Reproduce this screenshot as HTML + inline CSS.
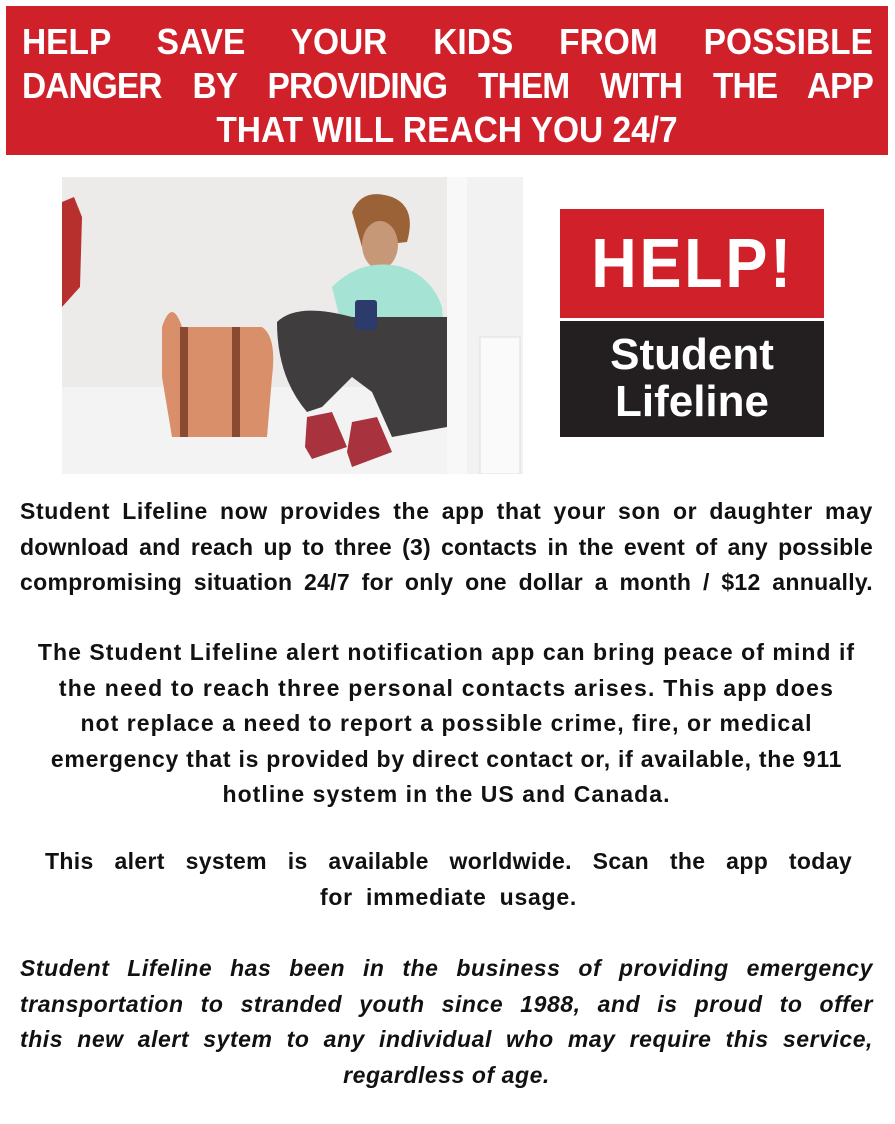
<!DOCTYPE html>
<html><head><meta charset="utf-8"><style>
body{margin:0;width:895px;height:1124px;background:#fff;font-family:"Liberation Sans",Arial,sans-serif;position:relative;overflow:hidden}
.hdr{position:absolute;left:6px;top:6px;width:882px;height:149px;background:#d0202a;color:#fff;font-weight:bold;font-size:36px;line-height:44px;box-sizing:border-box;padding:14px 16px 0 16px}
.hdr div{white-space:nowrap}
.hdr .j{text-align:justify;text-align-last:justify}
.hdr .c{text-align:center}
.p{position:absolute;left:20px;width:853px;font-weight:bold;font-size:23px;line-height:35.5px;color:#111}
.p div{white-space:nowrap}
.jl div{text-align:justify;text-align-last:justify}
.p .c{text-align:center;text-align-last:center}
</style></head><body>
<div class="hdr"><div class="j" style="transform:scaleX(0.93);transform-origin:left;width:915px">HELP SAVE YOUR KIDS FROM POSSIBLE</div><div class="j" style="transform:scaleX(0.93);transform-origin:left;width:915px;letter-spacing:-1px">DANGER BY PROVIDING THEM WITH THE APP</div><div class="c" style="transform:scaleX(0.93)">THAT WILL REACH YOU 24/7</div></div>

<svg style="position:absolute;left:62px;top:177px" width="461" height="297" viewBox="0 0 461 297">
<rect width="461" height="297" fill="#ecebea"/>
<rect x="0" y="210" width="461" height="87" fill="#f3f3f3"/>
<rect x="385" y="0" width="20" height="297" fill="#f8f8f8"/>
<rect x="405" y="0" width="56" height="297" fill="#f2f2f2"/>
<rect x="418" y="160" width="40" height="137" fill="#fafafa" stroke="#ddd"/>
<path d="M0 25 L12 20 L20 40 L18 110 L0 130Z" fill="#b8302e"/>
<path d="M100 150 Q110 120 120 150 L200 150 Q215 160 210 200 L205 260 L110 260 L100 200Z" fill="#d98f6a"/>
<rect x="118" y="150" width="8" height="110" fill="#8a4a32"/><rect x="170" y="150" width="8" height="110" fill="#8a4a32"/>
<path d="M290 35 Q300 10 330 20 Q355 30 345 65 L300 70Z" fill="#9a6236"/>
<ellipse cx="318" cy="68" rx="18" ry="24" fill="#c79878"/>
<path d="M270 110 Q300 80 340 90 Q370 100 380 130 L385 200 L290 200 L280 150Z" fill="#a5e3d4"/>
<path d="M215 145 Q235 125 290 140 L385 140 L385 250 L330 260 L310 215 L290 200 L260 230 L245 235 Q215 200 215 145Z" fill="#3f3d3e"/>
<rect x="293" y="123" width="22" height="30" rx="3" fill="#2a3b6c"/>
<path d="M245 240 L270 235 L285 270 L250 282 L243 270Z" fill="#a8333f"/>
<path d="M290 245 L315 240 L330 275 L290 290 L285 275Z" fill="#a8333f"/>
</svg>

<div style="position:absolute;left:560px;top:209px;width:264px;height:109px;background:#d0202a;color:#fff;font-weight:bold;font-size:70px;line-height:109px;text-align:center;letter-spacing:3px"><span style="display:inline-block;transform:scaleX(0.9)">HELP!</span></div>
<div style="position:absolute;left:560px;top:321px;width:264px;height:116px;background:#231f20;color:#fff;font-weight:bold;font-size:44px;line-height:47px;text-align:center;padding-top:10px;box-sizing:border-box">Student<br>Lifeline</div>

<div class="p jl" style="top:494px;letter-spacing:0.65px">
<div>Student Lifeline now provides the app that your son or daughter may</div>
<div style="letter-spacing:0.2px">download and reach up to three (3) contacts in the event of any possible</div>
<div style="letter-spacing:0.3px">compromising situation 24/7 for only one dollar a month / $12 annually.</div>
</div>
<div class="p" style="top:635px;letter-spacing:1.05px">
<div class="c">The Student Lifeline alert notification app can bring peace of mind if</div>
<div class="c" style="letter-spacing:1.25px">the need to reach three personal contacts arises. This app does</div>
<div class="c" style="letter-spacing:1.05px">not replace a need to report a possible crime, fire, or medical</div>
<div class="c" style="letter-spacing:0.75px">emergency that is provided by direct contact or, if available, the 911</div>
<div class="c">hotline system in the US and Canada.</div>
</div>
<div class="p" style="top:844px;left:45px;width:807px">
<div style="text-align:justify;text-align-last:justify;letter-spacing:0.35px">This alert system is available worldwide. Scan the app today</div>
<div class="c" style="word-spacing:6px;letter-spacing:0.75px">for immediate usage.</div>
</div>
<div class="p jl" style="top:951px;font-style:italic;letter-spacing:0.55px">
<div>Student Lifeline has been in the business of providing emergency</div>
<div>transportation to stranded youth since 1988, and is proud to offer</div>
<div>this new alert sytem to any individual who may require this service,</div>
<div class="c">regardless of age.</div>
</div>
</body></html>
